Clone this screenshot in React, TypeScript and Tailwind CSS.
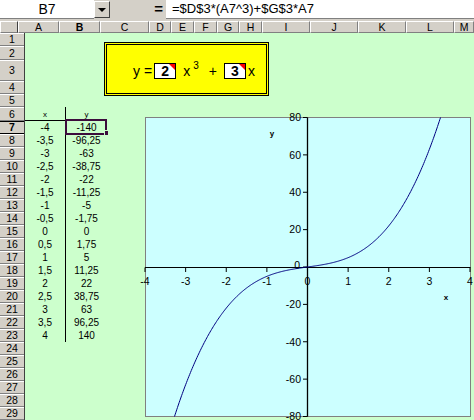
import React from "react";

const rowHeights = [
  "h-[13px]", "h-[14px]", "h-[21px]", "h-[13px]", "h-[13px]", "h-[14px]",
  ...Array(23).fill("h-[13px]"),
];
const cols: [string, string][] = [
  ["A", "w-[41px]"], ["B", "w-[41px]"], ["C", "w-[49px]"], ["D", "w-[22px]"],
  ["E", "w-[23px]"], ["F", "w-[23px]"], ["G", "w-[22px]"], ["H", "w-[23px]"],
  ["I", "w-[48px]"], ["J", "w-[48px]"], ["K", "w-[48px]"], ["L", "w-[48px]"],
  ["M", "w-[20px]"],
];

const fmt = (v: number) => v.toString().replace(".", ",");
const data = Array.from({ length: 17 }, (_, i) => {
  const x = -4 + i * 0.5;
  return { x: fmt(x), y: fmt(2 * x * x * x + 3 * x) };
});

const X = (v: number) => 307.5 + v * 40.625;
const Y = (v: number) => 267 - v * 1.86875;

function Chart() {
  const pts: string[] = [];
  for (let i = 0; i <= 400; i++) {
    const x = -4 + i * 0.02;
    pts.push(`${X(x).toFixed(2)},${Y(2 * x * x * x + 3 * x).toFixed(2)}`);
  }
  const xt = [-4, -3, -2, -1, 0, 1, 2, 3, 4];
  const yt = [80, 60, 40, 20, 0, -20, -40, -60, -80];
  return (
    <svg
      className="absolute left-[115px] top-[72px] w-[334px] h-[315px]"
      viewBox="140 105 334 315"
      style={{ fontFamily: '"Liberation Sans", Arial, sans-serif' }}
    >
      <defs>
        <clipPath id="plot">
          <rect x="145.5" y="117.5" width="325" height="299" />
        </clipPath>
      </defs>
      <rect x="145.5" y="117.5" width="325" height="299" fill="#ccffff" stroke="#808080" strokeWidth="1" />
      <line x1="145" y1="267.5" x2="470.5" y2="267.5" stroke="#000" strokeWidth="1" />
      <line x1="307.5" y1="117.5" x2="307.5" y2="416.5" stroke="#000" strokeWidth="1.3" />
      {xt.map((v) => (
        <g key={v}>
          <line x1={X(v)} y1="267.5" x2={X(v)} y2="272" stroke="#000" strokeWidth="1" />
          <text x={X(v)} y="285" fontSize="10.5" textAnchor="middle" fill="#000">
            {v}
          </text>
        </g>
      ))}
      {yt.map((v) => (
        <g key={v}>
          <line x1="303" y1={Y(v)} x2="307.5" y2={Y(v)} stroke="#000" strokeWidth="1" />
          <text x={v === 0 ? 300 : 301} y={Y(v) + (v === 0 ? 1.5 : 3.8)} fontSize="10.5" textAnchor="end" fill="#000">
            {v}
          </text>
        </g>
      ))}
      <polyline points={pts.join(" ")} fill="none" stroke="#000080" strokeWidth="1" clipPath="url(#plot)" />
      <text x="272" y="136" fontSize="8" fontWeight="bold" textAnchor="middle" fill="#000">y</text>
      <text x="446" y="300" fontSize="8" fontWeight="bold" textAnchor="middle" fill="#000">x</text>
    </svg>
  );
}

function ParamBox({ n }: { n: string }) {
  return (
    <div className="relative w-[22px] h-[16px] bg-white border border-black flex items-center justify-center text-[14px] font-bold leading-none">
      {n}
      <div className="absolute top-0 right-0 w-0 h-0 border-l-[6px] border-l-transparent border-t-[6px] border-t-[#ff0000]" />
    </div>
  );
}

export default function App() {
  return (
    <div
      className="w-[474px] h-[420px] overflow-hidden bg-[#d4d0c8] text-black select-none"
      style={{ fontFamily: '"Liberation Sans", Arial, sans-serif' }}
    >
      {/* formula bar */}
      <div className="flex h-[19px]">
        <div className="w-[94px] bg-white flex items-center justify-center text-[14px] border-b border-[#808080]">B7</div>
        <div className="w-[16px] h-[17px] mt-[1px] bg-[#d4d0c8] border border-t-white border-l-white border-r-[#404040] border-b-[#404040] flex items-center justify-center">
          <div className="w-0 h-0 border-l-[4px] border-r-[4px] border-t-[4px] border-l-transparent border-r-transparent border-t-black" />
        </div>
        <div className="w-[56px] flex items-center justify-end pr-[3px] text-[15px] font-bold">=</div>
        <div className="flex-1 bg-white flex items-center pl-[6px] text-[13px] border-b border-[#808080]">
          =$D$3*(A7^3)+$G$3*A7
        </div>
      </div>
      <div className="h-[2px]" />
      {/* column headers */}
      <div className="flex h-[12px] text-[10.5px] leading-none">
        <div className="w-[25px] border-t border-l border-t-white border-l-white border-r border-b border-r-[#404040] border-b-[#808080]" />
        {cols.map(([n, w]) => (
          <div
            key={n}
            className={`${w} shrink-0 flex items-center justify-center border-t border-l border-t-white border-l-white border-r border-b border-r-[#808080] border-b-[#808080] ${
              n === "B" ? "font-bold border-r-[#404040] border-b-[#404040]" : ""
            }`}
          >
            {n}
          </div>
        ))}
      </div>
      {/* body */}
      <div className="flex">
        <div className="w-[25px] shrink-0 flex flex-col border-r border-[#404040] text-[10.5px] leading-none">
          {rowHeights.map((h, i) => (
            <div
              key={i}
              className={`${h} flex items-center justify-center border-t border-b ${
                i === 6 ? "font-bold border-t-black border-b-black" : "border-t-white border-b-[#808080]"
              }`}
            >
              {i + 1}
            </div>
          ))}
        </div>
        <div className="flex-1 relative bg-[#ccffcc] text-[10px] leading-none">
          {rowHeights.map((h, i) => {
            const r = i + 1;
            const inTable = r >= 6 && r <= 23;
            const d = r >= 7 && r <= 23 ? data[r - 7] : null;
            return (
              <div key={i} className={`${h} flex`}>
                <div
                  className={`w-[41px] flex justify-center ${inTable ? "border-r border-black" : ""} ${
                    r === 6 ? "border-b items-end pb-[1px] text-[8px]" : "items-center"
                  }`}
                >
                  {r === 6 ? "x" : d ? d.x : ""}
                </div>
                <div
                  className={`w-[41px] flex justify-center ${r === 6 ? "border-b border-black items-end pb-[1px] text-[8px]" : "items-center"}`}
                >
                  {r === 6 ? "y" : d ? d.y : ""}
                </div>
              </div>
            );
          })}

          {/* selection B7 */}
          <div className="absolute left-[40px] top-[86px] w-[42px] h-[16px] border-2 border-[#3c0c3c]" />
          <div className="absolute left-[79px] top-[97px] w-[5px] h-[6px] bg-[#3c0c3c] border border-[#ccffcc]" />

          {/* formula text box */}
          <div className="absolute left-[79px] top-[9px] w-[165px] h-[54px] bg-[#ffff00] border-[3px] border-double border-black flex items-center pl-[26px] pt-[3px] text-[14px] leading-none">
            <span>y</span>
            <span className="ml-[4px]">=</span>
            <div className="ml-[2px]">
              <ParamBox n="2" />
            </div>
            <span className="ml-[7px]">x</span>
            <span className="ml-[3px] text-[10px] -mt-[10px]">3</span>
            <span className="ml-[10px]">+</span>
            <div className="ml-[7px]">
              <ParamBox n="3" />
            </div>
            <span className="ml-[2px]">x</span>
          </div>

          <Chart />
        </div>
      </div>
    </div>
  );
}
